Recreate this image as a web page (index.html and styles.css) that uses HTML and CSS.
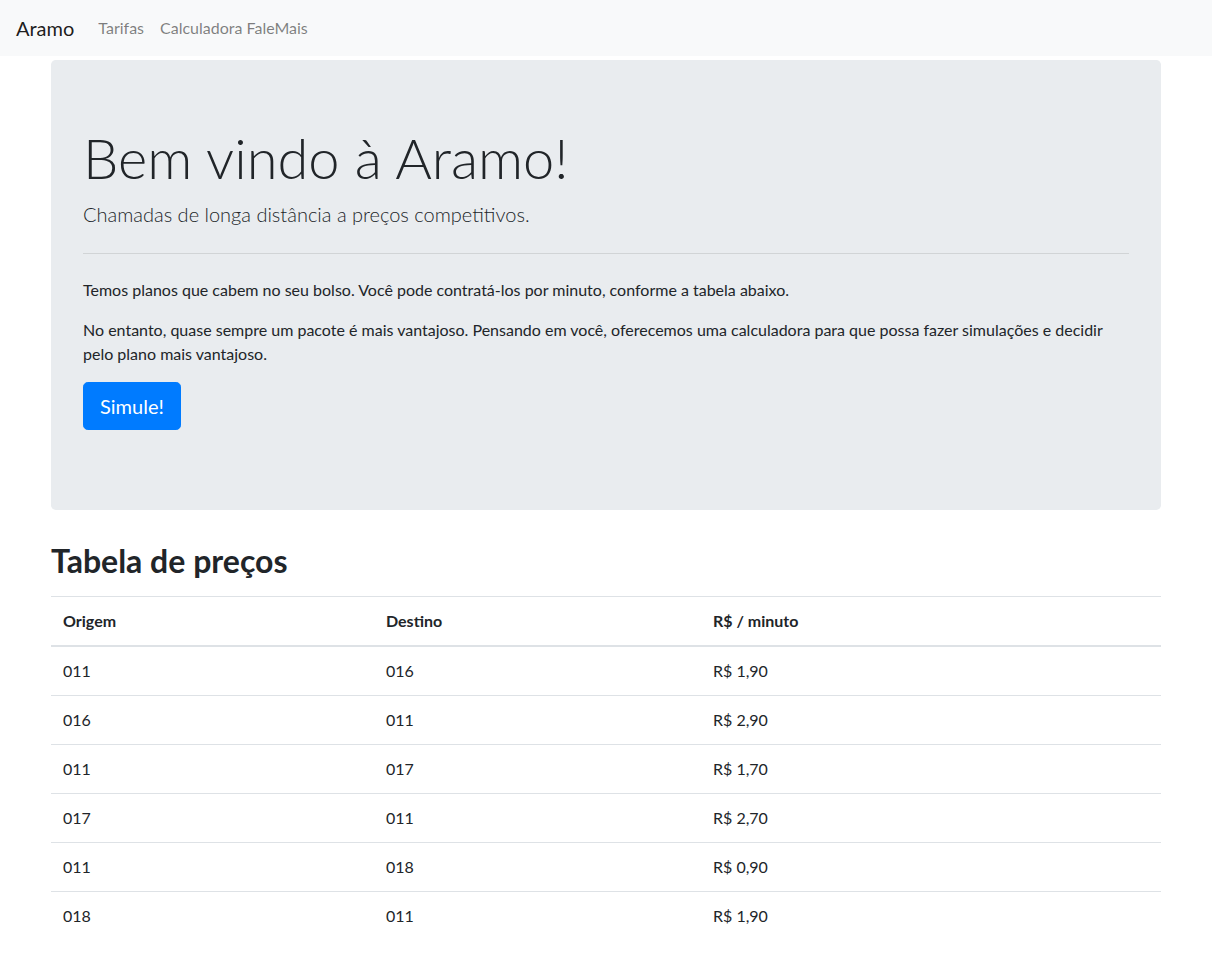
FILE: index.html
```html
<!DOCTYPE html>
<html lang="pt-BR">
<head>
<meta charset="utf-8">
<title>Aramo</title>
<link rel="stylesheet" href="styles.css">
</head>
<body>
<nav class="navbar">
  <a class="brand" href="#">Aramo</a>
  <ul class="nav">
    <li><a class="nav-link" href="#">Tarifas</a></li>
    <li><a class="nav-link" href="#">Calculadora FaleMais</a></li>
  </ul>
</nav>
<main class="container">
  <section class="jumbotron">
    <h1 class="display">Bem vindo à Aramo!</h1>
    <p class="lead">Chamadas de longa distância a preços competitivos.</p>
    <hr class="divider">
    <p>Temos planos que cabem no seu bolso. Você pode contratá-los por minuto, conforme a tabela abaixo.</p>
    <p>No entanto, quase sempre um pacote é mais vantajoso. Pensando em você, oferecemos uma calculadora para que possa fazer simulações e decidir pelo plano mais vantajoso.</p>
    <p class="lead"><a class="btn" href="#">Simule!</a></p>
  </section>
  <h2 class="title">Tabela de preços</h2>
  <table class="table">
    <thead>
      <tr><th class="c1">Origem</th><th class="c2">Destino</th><th>R$ / minuto</th></tr>
    </thead>
    <tbody>
      <tr><td>011</td><td>016</td><td>R$ 1,90</td></tr>
      <tr><td>016</td><td>011</td><td>R$ 2,90</td></tr>
      <tr><td>011</td><td>017</td><td>R$ 1,70</td></tr>
      <tr><td>017</td><td>011</td><td>R$ 2,70</td></tr>
      <tr><td>011</td><td>018</td><td>R$ 0,90</td></tr>
      <tr><td>018</td><td>011</td><td>R$ 1,90</td></tr>
    </tbody>
  </table>
</main>
</body>
</html>
```
FILE: styles.css
```css
* { box-sizing: border-box; }
html, body { margin: 0; padding: 0; }
body {
  font-family: Lato, "Liberation Sans", sans-serif;
  font-size: 16px;
  line-height: 1.5;
  color: #212529;
  background: #fff;
}
a { text-decoration: none; }

.navbar {
  display: flex;
  align-items: center;
  height: 56px;
  padding: 8px 16px;
  background: #f8f9fa;
}
.brand {
  font-size: 20px;
  line-height: 30px;
  padding: 5px 0;
  margin-right: 16px;
  color: rgba(0,0,0,.9);
}
.nav {
  display: flex;
  list-style: none;
  margin: 0;
  padding: 0;
}
.nav-link {
  display: block;
  padding: 8px;
  color: rgba(0,0,0,.5);
}

.container {
  max-width: 1140px;
  margin: 0 auto;
  padding: 0 15px;
}

.jumbotron {
  margin-top: 4px;
  margin-bottom: 32px;
  padding: 64px 32px;
  background: #e9ecef;
  border-radius: 4.8px;
}
.display {
  margin: 0 0 8px;
  font-size: 56px;
  font-weight: 300;
  line-height: 1.2;
}
.lead {
  margin: 0 0 16px;
  font-size: 20px;
  font-weight: 300;
}
.jumbotron p { margin-top: 0; margin-bottom: 16px; }
.divider {
  margin: 24px 0;
  border: 0;
  border-top: 1px solid rgba(0,0,0,.1);
}
.btn {
  display: inline-block;
  padding: 8px 16px;
  font-size: 20px;
  font-weight: 400;
  line-height: 1.5;
  color: #fff;
  background: #007bff;
  border: 1px solid #007bff;
  border-radius: 4.8px;
}

.title {
  margin: 0 0 15px;
  font-size: 32px;
  font-weight: 700;
  line-height: 1.2;
}

.table {
  width: 100%;
  margin-bottom: 16px;
  border-collapse: collapse;
  color: #212529;
}
.table th, .table td {
  padding: 12px;
  text-align: left;
  vertical-align: top;
  border-top: 1px solid #dee2e6;
}
.table thead th {
  font-weight: 700;
  vertical-align: bottom;
  border-bottom: 2px solid #dee2e6;
}
.c1 { width: 323px; }
.c2 { width: 327px; }
```
